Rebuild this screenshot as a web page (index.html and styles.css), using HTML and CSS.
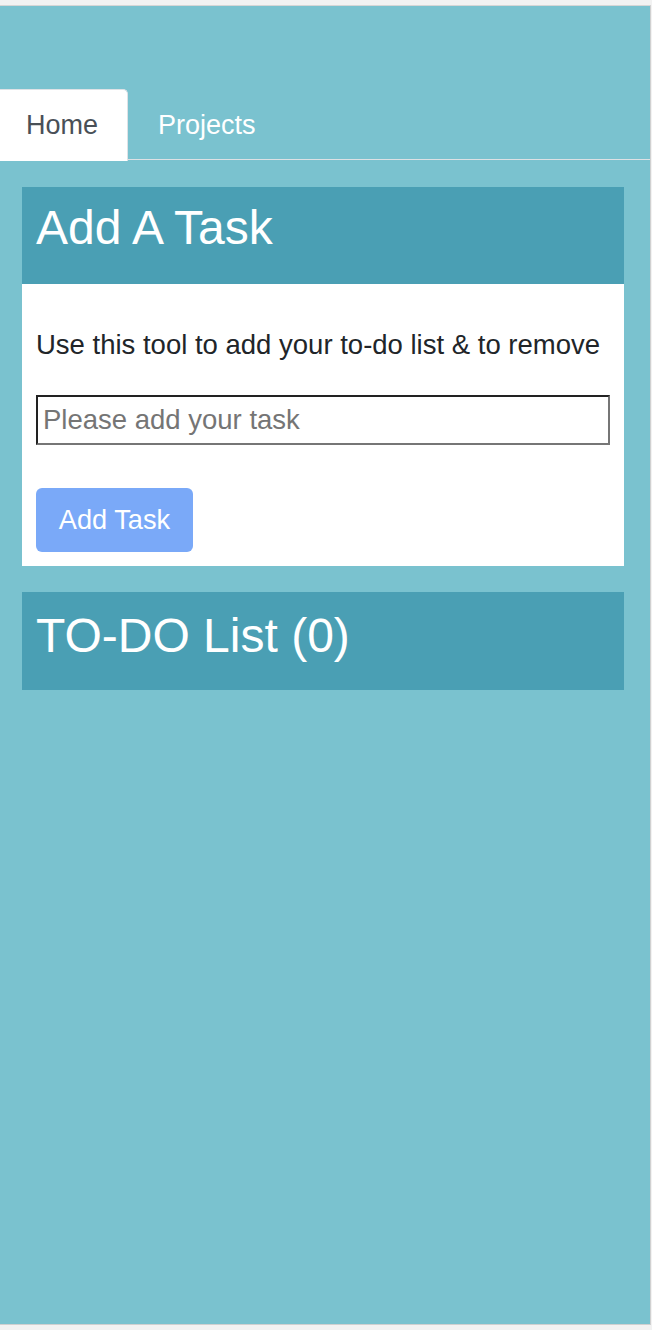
FILE: index.html
```html
<!DOCTYPE html>
<html lang="en">
<head>
<meta charset="utf-8">
<title>To-Do</title>
<link rel="stylesheet" href="styles.css">
</head>
<body>
<div class="frame">
  <nav class="tabs">
    <a class="tab tab-active">Home</a>
    <a class="tab">Projects</a>
  </nav>
  <main class="content">
    <section class="card">
      <h1 class="card-head head-add">Add A Task</h1>
      <div class="card-body">
        <p class="intro">Use this tool to add your to-do list &amp; to remove</p>
        <input class="task-input" type="text" placeholder="Please add your task">
        <button class="add-btn" type="button">Add Task</button>
      </div>
    </section>
    <section class="card card-list">
      <h2 class="card-head head-list">TO-DO List (0)</h2>
    </section>
  </main>
</div>
</body>
</html>
```
FILE: styles.css
```css
html, body {
  margin: 0;
  padding: 0;
}
body {
  background: #f2f2f2;
  font-family: "Liberation Sans", Arial, sans-serif;
}
.frame {
  margin-top: 5px;
  width: 651px;
  height: 1320px;
  box-sizing: border-box;
  background: #7ac2cf;
  border-top: 1px solid #d6d6d6;
  border-right: 1px solid #d0d0d0;
  border-bottom: 1px solid #d0d0d0;
  padding-top: 83px;
  overflow: hidden;
}
.tabs {
  display: flex;
  border-bottom: 1px solid #dde1e4;
  height: 70px;
}
.tab {
  display: block;
  height: 70px;
  line-height: 70px;
  padding: 0 29px;
  font-size: 27px;
  color: #ffffff;
  border: 1px solid transparent;
  border-bottom: none;
  border-top-right-radius: 5px;
  border-top-left-radius: 5px;
}
.tab-active {
  margin-left: -4px;
  background: #ffffff;
  color: #495057;
  border-color: #dee2e6;
  margin-bottom: -1px;
  padding-bottom: 1px;
}
.content {
  padding: 27px 26px 0 22px;
  display: flex;
  flex-direction: column;
  gap: 26px;
}
.card-head {
  margin: 0;
  background: #4a9fb4;
  color: #ffffff;
  font-weight: normal;
  line-height: normal;
  padding: 0 14px;
  box-sizing: border-box;
  font-size: 48px;
}
.head-add {
  padding-top: 13px;
  height: 97px;
}
.head-list {
  padding-top: 16px;
  height: 98px;
}
.card-body {
  background: #ffffff;
  padding: 14px;
  display: flex;
  flex-direction: column;
  align-items: flex-start;
}
.intro {
  margin: 31px 0 0;
  font-size: 27.5px;
  line-height: 31px;
  color: #212529;
  white-space: nowrap;
}
.task-input {
  margin-top: 35px;
  width: 574px;
  height: 50px;
  box-sizing: border-box;
  border-style: solid;
  border-width: 2px;
  border-color: #222222 #767676 #767676 #222222;
  padding: 0 5px;
  font-family: "Liberation Sans", Arial, sans-serif;
  font-size: 27.5px;
  color: #212529;
  background: #ffffff;
  outline: none;
}
.task-input::placeholder {
  color: #757575;
}
.add-btn {
  margin-top: 43px;
  width: 157px;
  height: 64px;
  border: none;
  border-radius: 6px;
  background: #7aa9f8;
  color: #ffffff;
  font-family: "Liberation Sans", Arial, sans-serif;
  font-size: 27.2px;
  padding: 0;
}
```
